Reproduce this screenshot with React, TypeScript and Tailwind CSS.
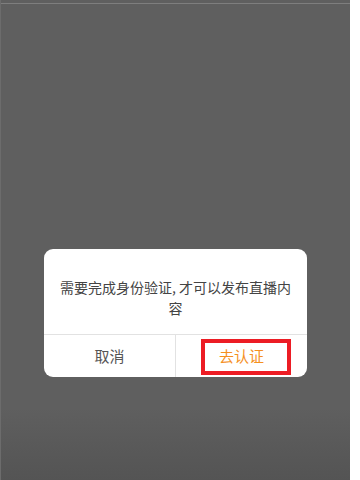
export default function App() {
  return (
    <div className="w-[360px] h-[480px] bg-white flex" style={{ fontFamily: '"Noto Sans CJK SC", "Noto Sans", sans-serif' }}>
      <div className="w-[350px] h-full flex flex-col bg-[#5f5f5f] border-l border-[#6c6c6c]">
        <div className="h-[3px]" />
        <div className="h-px bg-[#7e7e7e]" />
        <div className="flex-1 flex flex-col bg-gradient-to-b from-[#5f5f5f] from-85% to-[#545454]">
          <div className="mt-[245px] ml-[43px] w-[263px] bg-white rounded-[9px] flex flex-col overflow-hidden">
            <div className="pt-[28px] pb-[15px] px-[14px] text-center text-[14px] leading-[21px] text-[#444444]">
              需要完成身份验证, 才可以发布直播内容
            </div>
            <div className="h-px bg-[#e2e2e2]" />
            <div className="flex h-[42px]">
              <div className="flex-1 flex items-center justify-center text-[15px] text-[#555555]">取消</div>
              <div className="w-px bg-[#e2e2e2]" />
              <div className="relative flex-1 flex items-center justify-center text-[15px] text-[#f5901e]">
                <span>去认证</span>
                <div className="absolute left-[25px] top-[4px] w-[90px] h-[36px] border-[4px] border-[#ec1c24]" />
              </div>
            </div>
          </div>
        </div>
      </div>
    </div>
  );
}
